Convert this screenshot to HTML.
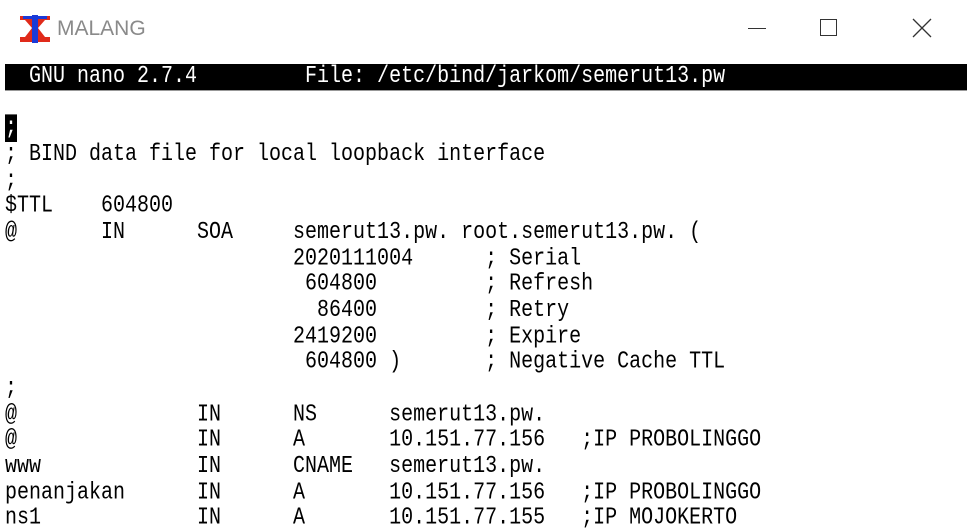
<!DOCTYPE html>
<html><head><style>
html,body{margin:0;padding:0;width:970px;height:514px;overflow:hidden;background:#fff;}
.title{position:absolute;left:0;top:0;width:970px;height:60px;background:#fff;}
.tname{position:absolute;left:57px;top:17px;font:21px "Liberation Sans",sans-serif;color:#8a8a8a;}
.term{position:absolute;left:5px;top:64px;width:962px;transform:scaleY(1.2);transform-origin:0 0;
 font:20px/21.667px "Liberation Mono",monospace;color:#000;white-space:pre;}
.term div{height:21.667px;}
.bar{background:#000;color:#fff;}
.cur{background:#000;color:#fff;}
</style></head><body>
<div class="title">
<svg style="position:absolute;left:19px;top:14px" width="32" height="30" viewBox="0 0 32 30">
<path d="M1 2h12l3 5 3-5h12v4h-5l-7 8 7 9h5v5H19l-3-5-3 5H1v-5h5l7-9-7-8H1z" fill="#e02a1a"/>
<rect x="13" y="1" width="6" height="28" fill="#1a3ad8"/>
<rect x="4" y="2" width="24" height="3" fill="#1a3ad8"/>
</svg>
<div class="tname">MALANG</div>
<div style="position:absolute;left:748px;top:28px;width:18px;height:1px;background:#333"></div>
<div style="position:absolute;left:820px;top:19px;width:17px;height:17px;border:1px solid #333;box-sizing:border-box"></div>
<svg style="position:absolute;left:912px;top:18px" width="20" height="20"><path d="M1 1L19 19M19 1L1 19" stroke="#333" stroke-width="1.3"/></svg>
</div>
<div class="term"><div class="bar">  GNU nano 2.7.4         File: /etc/bind/jarkom/semerut13.pw                   </div><div> </div><div><span class="cur">;</span></div><div>; BIND data file for local loopback interface</div><div>;</div><div>$TTL    604800</div><div>@       IN      SOA     semerut13.pw. root.semerut13.pw. (</div><div>                        2020111004      ; Serial</div><div>                         604800         ; Refresh</div><div>                          86400         ; Retry</div><div>                        2419200         ; Expire</div><div>                         604800 )       ; Negative Cache TTL</div><div>;</div><div>@               IN      NS      semerut13.pw.</div><div>@               IN      A       10.151.77.156   ;IP PROBOLINGGO</div><div>www             IN      CNAME   semerut13.pw.</div><div>penanjakan      IN      A       10.151.77.156   ;IP PROBOLINGGO</div><div>ns1             IN      A       10.151.77.155   ;IP MOJOKERTO</div></div>
</body></html>
